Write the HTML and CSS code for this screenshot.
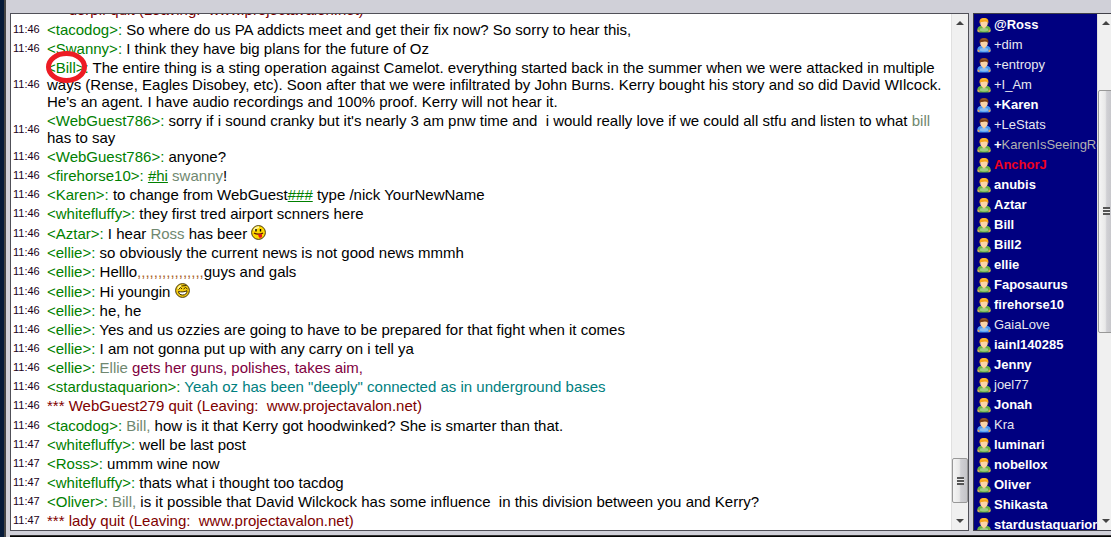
FILE: index.html
```html
<!DOCTYPE html>
<html lang="en">
	<head>
		<meta charset="UTF-8">
		<meta name="viewport" content="width=device-width, initial-scale=1.0">
		<title>Chat</title>
		<link rel="stylesheet" href="styles.css">
	</head>
	<body>
		<!-- Icon shapes -->
		<svg class="sprites" aria-hidden="true">
			<symbol id="user-body" viewBox="0 0 14 15">
				<path d="M0.3 12.8C0.1 9.8 1.6 8 4.2 7.8h5.6c2.6 0.2 4.1 2 3.9 5-0.1 1.2-1 1.7-2 1.7H2.3c-1 0-1.9-0.5-2-1.7z" fill="currentColor"/>
				<path d="M3 10.8c1-1 7-1 8 0v2c-2 0.9-6 0.9-8 0z" fill="#fff" opacity="0.35"/>
				<path d="M0.3 11.8h2.2v2.2H1zM11.5 11.8h2.2l-0.7 2.2h-1.5z" fill="#e0a060"/>
				<path d="M5 7.5h4v1.5L7 10.8 5 9z" fill="#f5c898"/>
				<ellipse cx="7" cy="5" rx="3.8" ry="3.9" fill="#fad4a8"/>
			</symbol>
			<symbol id="user-green" viewBox="0 0 14 15">
				<use href="#user-body" color="#68b040"/>
				<path d="M2.7 5.6C2 1.8 3.4 0 7 0s5 1.8 4.3 5.6L10.2 4 8 3.6 5 4 3.8 4z" fill="#f5a51c"/>
				<path d="M4.5 1.6c1-0.8 4-0.8 5 0" stroke="#ffc840" fill="none"/>
			</symbol>
			<symbol id="user-blue" viewBox="0 0 14 15">
				<use href="#user-body" color="#4898f0"/>
				<path d="M2.7 5.6C2 1.8 3.4 0 7 0s5 1.8 4.3 5.6L10.2 4 8 3.6 5 4 3.8 4z" fill="#7c3f18"/>
				<path d="M4.5 1.6c1-0.8 4-0.8 5 0" stroke="#a8683c" fill="none"/>
			</symbol>
		</svg>

		<main class="chat">
			<div class="panes">
				<section class="messages">
					<div class="log">
						<table class="lines">
							<tr class="notice"><td class="time">11:46</td><td>*** derpif quit (Leaving:&nbsp; www.projectavalon.net)</td></tr>
							<tr><td class="time">11:46</td><td><span class="nick">&lt;tacodog&gt;:</span> So where do us PA addicts meet and get their fix now? So sorry to hear this,</td></tr>
							<tr><td class="time">11:46</td><td><span class="nick">&lt;Swanny&gt;:</span> I think they have big plans for the future of Oz</td></tr>
							<tr><td class="time">11:46</td><td><span class="nick circled">&lt;Bill&gt;:<svg class="ring" viewBox="0 0 41 32" aria-hidden="true"><ellipse cx="20.5" cy="16" rx="18" ry="13.5" fill="none" stroke="#ed1c24" stroke-width="5"/></svg></span> The entire thing is a sting operation against Camelot. everything started back in the summer when we were attacked in multiple ways (Rense, Eagles Disobey, etc). Soon after that we were infiltrated by John Burns. Kerry bought his story and so did David WIlcock. He's an agent. I have audio recordings and 100% proof. Kerry will not hear it.</td></tr>
							<tr><td class="time">11:46</td><td><span class="nick">&lt;WebGuest786&gt;:</span> sorry if i sound cranky but it's nearly 3 am pnw time and&nbsp; i would really love if we could all stfu and listen to what <span class="mention">bill</span> has to say</td></tr>
							<tr><td class="time">11:46</td><td><span class="nick">&lt;WebGuest786&gt;:</span> anyone?</td></tr>
							<tr><td class="time">11:46</td><td><span class="nick">&lt;firehorse10&gt;:</span> <a class="channel" href="#hi">#hi</a> <span class="mention">swanny</span>!</td></tr>
							<tr><td class="time">11:46</td><td><span class="nick">&lt;Karen&gt;:</span> to change from WebGuest<a class="channel" href="#channel">###</a> type /nick YourNewName</td></tr>
							<tr><td class="time">11:46</td><td><span class="nick">&lt;whitefluffy&gt;:</span> they first tred airport scnners here</td></tr>
							<tr><td class="time">11:46</td><td><span class="nick">&lt;Aztar&gt;:</span> I hear <span class="mention">Ross</span> has beer
								<svg class="smiley" viewBox="0 0 15 15" role="img" aria-label="tongue out">
									<circle cx="7.5" cy="7.5" r="6.9" fill="#ffd800" stroke="#4a3a10"/>
									<path d="M3 5.5a5 5 0 0 1 5-3.2" stroke="#fff59a" stroke-width="2" fill="none"/>
									<path d="M5 4v2.5M9.5 4v2.5" stroke="#000" stroke-width="1.4"/>
									<path d="M3 8c2 1.5 7 1.5 9 0" stroke="#5a1400" stroke-width="1.2" fill="none"/>
									<path d="M7 9.2h4v2.3c0 1.6-2.6 1.8-3.2 0.4z" fill="#e8101c"/>
								</svg></td></tr>
							<tr><td class="time">11:46</td><td><span class="nick">&lt;ellie&gt;:</span> so obviously the current news is not good news mmmh</td></tr>
							<tr><td class="time">11:46</td><td><span class="nick">&lt;ellie&gt;:</span> Helllo<span class="commas">,,,,,,,,,,,,,,,,</span>guys and gals</td></tr>
							<tr><td class="time">11:46</td><td><span class="nick">&lt;ellie&gt;:</span> Hi youngin
								<svg class="smiley" viewBox="0 0 15 15" role="img" aria-label="grin">
									<circle cx="7.5" cy="7.5" r="6.9" fill="#f5cc10" stroke="#4a3a10"/>
									<path d="M3 6a5 5 0 0 1 3-3.5" stroke="#fff59a" stroke-width="1.5" fill="none"/>
									<path d="M3.5 6.5l2-2 1.5 1.5M8.5 6l2-1.5 2 1.5M6.5 3l5-0.5" stroke="#3c2c00" fill="none"/>
									<path d="M3.5 8.5c3 0.8 6 0.5 8.5-0.8 0 3-1.8 4.3-4.3 4.3s-4-1.3-4.2-3.5z" fill="#fff" stroke="#3c2c00"/>
								</svg></td></tr>
							<tr><td class="time">11:46</td><td><span class="nick">&lt;ellie&gt;:</span> he, he</td></tr>
							<tr><td class="time">11:46</td><td><span class="nick">&lt;ellie&gt;:</span> Yes and us ozzies are going to have to be prepared for that fight when it comes</td></tr>
							<tr><td class="time">11:46</td><td><span class="nick">&lt;ellie&gt;:</span> I am not gonna put up with any carry on i tell ya</td></tr>
							<tr><td class="time">11:46</td><td class="plum"><span class="nick">&lt;ellie&gt;:</span> <span class="mention">Ellie</span> gets her guns, polishes, takes aim,</td></tr>
							<tr><td class="time">11:46</td><td class="teal"><span class="nick">&lt;stardustaquarion&gt;:</span> Yeah oz has been "deeply" connected as in underground bases</td></tr>
							<tr class="notice"><td class="time">11:46</td><td>*** WebGuest279 quit (Leaving:&nbsp; www.projectavalon.net)</td></tr>
							<tr><td class="time">11:46</td><td><span class="nick">&lt;tacodog&gt;:</span> <span class="mention">Bill,</span> how is it that Kerry got hoodwinked? She is smarter than that.</td></tr>
							<tr><td class="time">11:47</td><td><span class="nick">&lt;whitefluffy&gt;:</span> well be last post</td></tr>
							<tr><td class="time">11:47</td><td><span class="nick">&lt;Ross&gt;:</span> ummm wine now</td></tr>
							<tr><td class="time">11:47</td><td><span class="nick">&lt;whitefluffy&gt;:</span> thats what i thought too tacdog</td></tr>
							<tr><td class="time">11:47</td><td><span class="nick">&lt;Oliver&gt;:</span> <span class="mention">Bill,</span> is it possible that David Wilckock has some influence&nbsp; in this division between you and Kerry?</td></tr>
							<tr class="notice"><td class="time">11:47</td><td>*** lady quit (Leaving:&nbsp; www.projectavalon.net)</td></tr>
						</table>
					</div>
					<div class="scrollbar">
						<button class="arrow up" type="button" aria-label="Scroll up"></button>
						<div class="track track-end"><div class="thumb thumb-short"></div></div>
						<button class="arrow down" type="button" aria-label="Scroll down"></button>
					</div>
				</section>

				<aside class="users">
					<ul class="names">
						<li class="active"><svg class="avatar"><use href="#user-green"/></svg>@Ross</li>
						<li><svg class="avatar"><use href="#user-blue"/></svg>+dim</li>
						<li><svg class="avatar"><use href="#user-blue"/></svg>+entropy</li>
						<li><svg class="avatar"><use href="#user-green"/></svg>+I_Am</li>
						<li class="active"><svg class="avatar"><use href="#user-blue"/></svg>+Karen</li>
						<li><svg class="avatar"><use href="#user-blue"/></svg>+LeStats</li>
						<li class="away"><svg class="avatar"><use href="#user-green"/></svg><b>+</b>KarenIsSeeingRed</li>
						<li class="active self"><svg class="avatar"><use href="#user-green"/></svg>AnchorJ</li>
						<li class="active"><svg class="avatar"><use href="#user-green"/></svg>anubis</li>
						<li class="active"><svg class="avatar"><use href="#user-green"/></svg>Aztar</li>
						<li class="active"><svg class="avatar"><use href="#user-green"/></svg>Bill</li>
						<li class="active"><svg class="avatar"><use href="#user-green"/></svg>Bill2</li>
						<li class="active"><svg class="avatar"><use href="#user-green"/></svg>ellie</li>
						<li class="active"><svg class="avatar"><use href="#user-green"/></svg>Faposaurus</li>
						<li class="active"><svg class="avatar"><use href="#user-green"/></svg>firehorse10</li>
						<li><svg class="avatar"><use href="#user-blue"/></svg>GaiaLove</li>
						<li class="active"><svg class="avatar"><use href="#user-green"/></svg>iainl140285</li>
						<li class="active"><svg class="avatar"><use href="#user-green"/></svg>Jenny</li>
						<li><svg class="avatar"><use href="#user-green"/></svg>joel77</li>
						<li class="active"><svg class="avatar"><use href="#user-green"/></svg>Jonah</li>
						<li><svg class="avatar"><use href="#user-blue"/></svg>Kra</li>
						<li class="active"><svg class="avatar"><use href="#user-green"/></svg>luminari</li>
						<li class="active"><svg class="avatar"><use href="#user-green"/></svg>nobellox</li>
						<li class="active"><svg class="avatar"><use href="#user-green"/></svg>Oliver</li>
						<li class="active"><svg class="avatar"><use href="#user-green"/></svg>Shikasta</li>
						<li class="active"><svg class="avatar"><use href="#user-green"/></svg>stardustaquarion</li>
					</ul>
					<div class="scrollbar">
						<button class="arrow up" type="button" aria-label="Scroll up"></button>
						<div class="track track-start"><div class="thumb thumb-long"></div></div>
						<button class="arrow down" type="button" aria-label="Scroll down"></button>
					</div>
				</aside>
			</div>
			<div class="entry"></div>
		</main>
	</body>
</html>
```
FILE: styles.css
```css
* {
	box-sizing: border-box;
}

body {
	height: 100vh;
	margin: 0;
	border-left: 4px solid #051a38;
	font-family: "Liberation Sans", Arial, sans-serif;
	overflow: hidden;
}

.sprites {
	display: none;
}

.chat {
	display: flex;
	flex-direction: column;
	gap: 4px;
	height: 100%;
	padding: 13px 0 0 4px;
	border-left: 2px solid #444;
	background: #d0d0d8;
}

.panes {
	display: flex;
	flex: 1;
	gap: 4px;
	min-height: 0;
}

.entry {
	height: 2px;
	border-top: 1px solid #333;
	background: #000;
}

/* Message log */
.messages {
	display: flex;
	flex: 1;
	min-width: 0;
	border: 1px solid #505058;
	background: #fff;
}

.log {
	display: flex;
	flex: 1;
	flex-direction: column;
	justify-content: flex-end;
	overflow: hidden;
}

.lines {
	width: 100%;
	border-spacing: 0;
	font-size: 15px;
	line-height: 17px;
	color: #000;
}

.lines td {
	padding: 1px 0;
	vertical-align: middle;
}

.lines .time {
	width: 36px;
	padding-left: 2px;
	font-size: 11px;
	color: #200020;
}

.nick,
.channel {
	color: #008000;
}

.mention {
	color: #708870;
}

.notice {
	color: #800000;
}

.lines .notice:not(:last-child) td {
	padding-bottom: 2px;
}

.plum {
	color: #800040;
}

.teal {
	color: #008080;
}

.commas {
	color: #a86028;
}

.smiley {
	width: 15px;
	height: 17px;
	vertical-align: -2px;
}

.circled {
	position: relative;
}

.ring {
	position: absolute;
	top: -8px;
	left: -1px;
	width: 41px;
	height: 32px;
}

/* User list */
.users {
	display: flex;
	width: 138px;
	border: 1px solid #404048;
	border-right: 0;
	background: #000080;
	overflow: hidden;
}

.names {
	flex: none;
	width: 123px;
	margin: 0;
	padding: 1px 0 0 3px;
	list-style: none;
	font-size: 13px;
	line-height: 20px;
	color: #e8e8f0;
	overflow: hidden;
}

.names li {
	display: flex;
	align-items: center;
	height: 20px;
	white-space: nowrap;
}

.names .active {
	font-weight: bold;
	color: #fff;
}

.names .away {
	color: #b0b0b0;
}

.names .away b {
	color: #fff;
}

.names .self {
	color: #f00020;
}

.avatar {
	flex: none;
	width: 14px;
	height: 15px;
	margin-right: 3px;
}

/* Scrollbars */
.scrollbar {
	display: flex;
	flex: none;
	flex-direction: column;
	width: 17px;
	border-left: 1px solid #e0e0e0;
	background: #f0f0f0;
}

.arrow {
	display: flex;
	align-items: center;
	justify-content: center;
	height: 18px;
	padding: 0;
	border: 0;
	background: none;
}

.arrow::before {
	content: "";
	border: 4px solid transparent;
}

.up::before {
	border-top: 0;
	border-bottom-color: #444;
}

.down::before {
	border-bottom: 0;
	border-top-color: #444;
}

.track {
	display: flex;
	flex: 1;
	flex-direction: column;
}

.track::before,
.track::after {
	content: "";
}

.track-end::before {
	flex: 427;
}

.track-end::after {
	flex: 9;
}

.track-start::before {
	flex: 58;
}

.track-start::after {
	flex: 180;
}

.thumb {
	display: flex;
	align-items: center;
	justify-content: center;
	border: 1px solid #989898;
	border-radius: 2px;
	background: linear-gradient(to right, #f5f5f5, #e8e8e8 45%, #d0d0d4 55%, #c4c4c8);
}

.thumb-short {
	height: 45px;
}

.thumb-long {
	height: 243px;
}

.thumb::before {
	content: "";
	width: 7px;
	height: 8px;
	background: repeating-linear-gradient(#555 0 2px, #eee 2px 3px);
}
```
